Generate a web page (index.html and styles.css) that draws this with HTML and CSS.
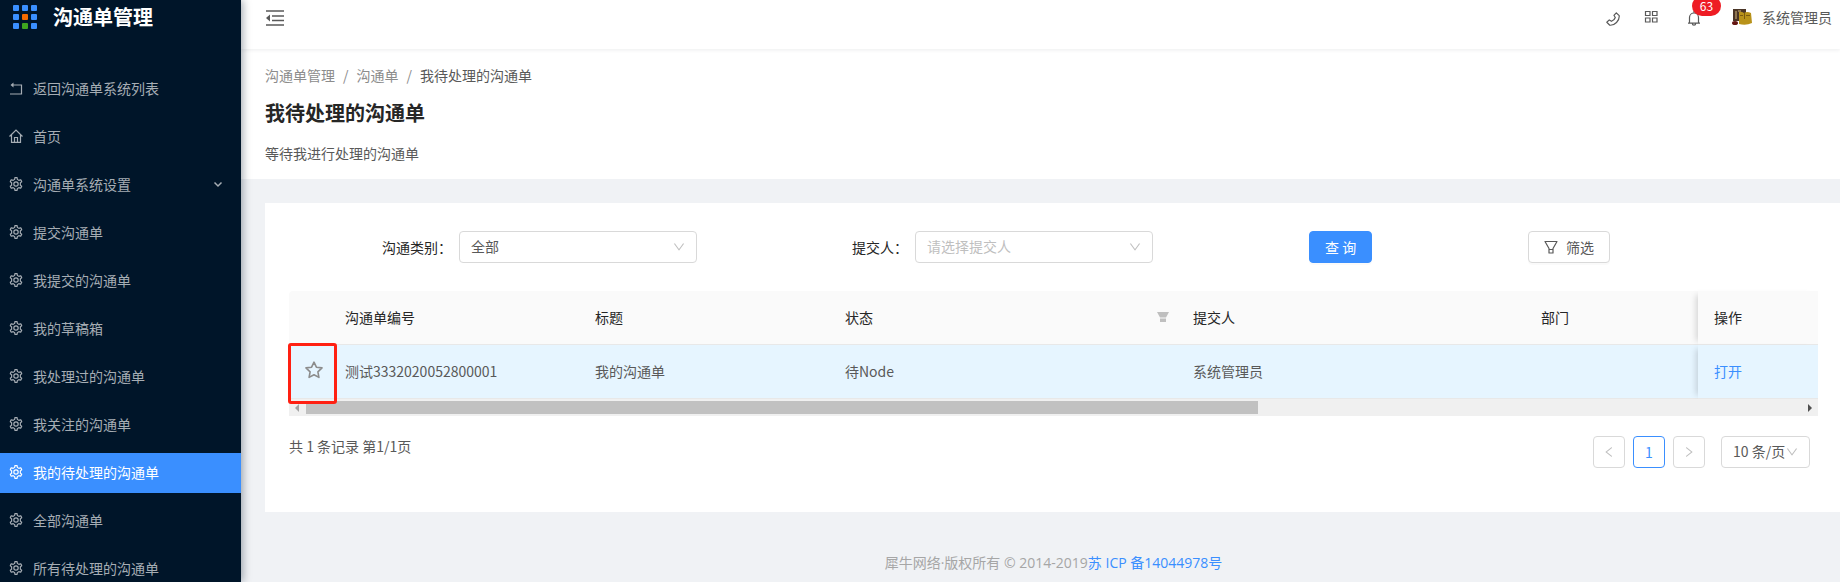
FILE: index.html
```
<!DOCTYPE html>
<html lang="zh-CN">
<head>
<meta charset="UTF-8">
<meta name="viewport" content="width=device-width, initial-scale=1.0">
<title>我待处理的沟通单</title>
<link rel="stylesheet" href="styles.css">
</head>
<body>

<!-- icons -->
<svg class="sprite" aria-hidden="true">
  <symbol id="i-setting" viewBox="64 64 896 896">
    <path fill="none" stroke="currentColor" stroke-width="76" stroke-linejoin="round" d="M443 108q69-14 138 0l19 116q52 18 94 56l112-40q48 54 70 124l-88 76q10 67 0 144l88 76q-22 66-70 124l-112-40q-42 38-94 56l-19 116q-69 14-138 0l-19-116q-52-18-94-56l-112 40q-48-54-70-124l88-76q-10-67 0-144l-88-76q22-66 70-124l112 40q42-38 94-56z"/>
    <circle cx="512" cy="512" r="140" fill="none" stroke="currentColor" stroke-width="76"/>
  </symbol>
  <symbol id="i-down" viewBox="64 64 896 896">
    <path fill="currentColor" d="M884 256h-75c-5.100 0-9.900 2.500-12.900 6.600L512 654.200 227.900 262.600c-3-4.100-7.800-6.600-12.900-6.600h-75c-6.500 0-10.300 7.400-6.500 12.700l352.600 486.100c12.800 17.600 39 17.600 51.700 0l352.600-486.100c3.900-5.300.1-12.700-6.400-12.700z"/>
  </symbol>
  <symbol id="i-left" viewBox="64 64 896 896">
    <path fill="currentColor" d="M724 218.300V141c0-6.700-7.700-10.400-12.900-6.300L260.300 486.800a31.860 31.860 0 0 0 0 50.300l450.800 352.100c5.300 4.100 12.900.4 12.900-6.300v-77.300c0-4.900-2.300-9.600-6.100-12.600l-360-281 360-281.100c3.800-3 6.100-7.700 6.100-12.600z"/>
  </symbol>
</svg>

<div class="layout">
  <aside class="sider">
    <div class="logo">
      <svg class="logo-mark" viewBox="0 0 24 24" aria-hidden="true">
        <g fill="#3a8fff">
          <rect width="6" height="6" rx="1"/><rect x="9" width="6" height="6" rx="1"/><rect x="18" width="6" height="6" rx="1"/>
          <rect y="9" width="6" height="6" rx="1"/><rect x="18" y="9" width="6" height="6" rx="1"/>
          <rect y="18" width="6" height="6" rx="1"/><rect x="18" y="18" width="6" height="6" rx="1"/>
        </g>
        <rect x="9" y="9" width="6" height="6" rx="1" fill="#f56a00"/>
        <rect x="9" y="18" width="6" height="6" rx="1" fill="#3fa41f"/>
      </svg>
      <strong>沟通单管理</strong>
    </div>
    <nav class="menu">
      <a href="#"><svg class="icon" viewBox="0 0 14 14"><path fill="none" stroke="currentColor" stroke-width="1.200" d="M1 13h11.500V4H3"/><path fill="currentColor" d="M4.500 1.500v5L1.500 4z"/></svg>返回沟通单系统列表</a>
      <a href="#"><svg class="icon" viewBox="0 0 14 14"><path fill="none" stroke="currentColor" stroke-width="1.200" d="M.5 7.500 7 1l6.500 6.500M2.500 6v7.300h9V6M5.500 13V8.500h3V13"/></svg>首页</a>
      <a href="#"><svg class="icon"><use href="#i-setting"/></svg>沟通单系统设置<svg class="arrow" viewBox="0 0 10 10"><path fill="none" stroke="currentColor" stroke-width="1.500" d="M1.500 3.500 5 7l3.500-3.500"/></svg></a>
      <a href="#"><svg class="icon"><use href="#i-setting"/></svg>提交沟通单</a>
      <a href="#"><svg class="icon"><use href="#i-setting"/></svg>我提交的沟通单</a>
      <a href="#"><svg class="icon"><use href="#i-setting"/></svg>我的草稿箱</a>
      <a href="#"><svg class="icon"><use href="#i-setting"/></svg>我处理过的沟通单</a>
      <a href="#"><svg class="icon"><use href="#i-setting"/></svg>我关注的沟通单</a>
      <a href="#" class="active"><svg class="icon"><use href="#i-setting"/></svg>我的待处理的沟通单</a>
      <a href="#"><svg class="icon"><use href="#i-setting"/></svg>全部沟通单</a>
      <a href="#"><svg class="icon"><use href="#i-setting"/></svg>所有待处理的沟通单</a>
    </nav>
  </aside>

  <div class="main">
    <header class="topbar">
      <button type="button" class="icon-btn fold" aria-label="收起菜单">
        <svg viewBox="0 0 18 16"><path fill="none" stroke="currentColor" stroke-width="1.600" d="M0 1h18M6 6h12M6 10.500h12M0 15h18"/><path fill="currentColor" d="M4 4.500v7L0 8z"/></svg>
      </button>
      <div class="tools">
        <button type="button" class="icon-btn phone" aria-label="电话">
          <svg viewBox="0 0 14 14"><path fill="none" stroke="currentColor" stroke-width="1.200" stroke-linejoin="round" d="M10.300.8 13.200 3.700Q13.500 7.500 10.500 10.500T3.800 13.200L.8 10.300 3.300 7.900 5.500 9.300Q8.500 8 9.300 5.500L7.900 3.300z"/></svg>
        </button>
        <button type="button" class="icon-btn" aria-label="应用">
          <svg viewBox="0 0 14 14"><path fill="none" stroke="currentColor" stroke-width="1.200" d="M1.500 1.500h4.500v4H1.500zM8.500 1.500h4.500v4H8.500zM1.500 8h4.500v4H1.500zM8.500 8h4.500v4H8.500z"/></svg>
        </button>
        <button type="button" class="icon-btn bell" aria-label="通知">
          <svg viewBox="0 0 14 16"><path fill="none" stroke="currentColor" stroke-width="1.200" d="M1 13.200h12M2.500 13V7.500a4.500 4.500 0 0 1 9 0V13M7 3V1M5.300 13.500a1.700 1.700 0 0 0 3.400 0"/></svg>
          <span class="badge">63</span>
        </button>
        <a href="#" class="user">
          <svg class="avatar" viewBox="0 0 20 18" aria-hidden="true">
            <path fill="#4a3527" d="M1 1h13v12H1z"/>
            <path fill="#8f7650" d="M3 3h2v8H3zM6 2h3v2H6z"/>
            <path fill="#b8921a" d="M7 4q2-1 5 1 3-2 7 0l1 10q-6 3-13 1z"/>
            <path fill="#7b5a10" d="M12 5h1v6h-1zM8 7h3v1H8zM14 7h4v1h-4z"/>
            <ellipse cx="3" cy="15" rx="3" ry="2" fill="#641512"/>
          </svg>
          系统管理员
        </a>
      </div>
    </header>

    <section class="page-header">
      <nav class="breadcrumb">
        <a href="#">沟通单管理</a><span class="sep">/</span><a href="#">沟通单</a><span class="sep">/</span><span class="current">我待处理的沟通单</span>
      </nav>
      <h1>我待处理的沟通单</h1>
      <p>等待我进行处理的沟通单</p>
    </section>

    <main class="card">
      <form class="search">
        <div class="field">
          <label for="category">沟通类别：</label>
          <div class="select">
            <select id="category"><option>全部</option></select>
            <svg class="caret"><use href="#i-down"/></svg>
          </div>
        </div>
        <div class="field">
          <label for="submitter">提交人：</label>
          <div class="select">
            <select id="submitter" class="empty"><option>请选择提交人</option></select>
            <svg class="caret"><use href="#i-down"/></svg>
          </div>
        </div>
        <div class="field"><button type="button" class="btn primary">查 询</button></div>
        <div class="field">
          <button type="button" class="btn">
            <svg class="btn-icon" viewBox="0 0 14 14"><path fill="none" stroke="currentColor" stroke-width="1.200" stroke-linejoin="round" d="M1 1.500h12L9 8.500V13H5V8.500zM5 9.500h4"/></svg>筛选
          </button>
        </div>
      </form>

      <div class="table-wrap">
        <table>
          <colgroup>
            <col class="c-star"><col class="c-text"><col class="c-text"><col class="c-wide"><col class="c-wide"><col><col class="c-action">
          </colgroup>
          <thead>
            <tr>
              <th></th>
              <th>沟通单编号</th>
              <th>标题</th>
              <th><div class="filter-head">状态<svg class="filter" viewBox="0 0 12 12"><path fill="currentColor" d="M0 1h12L9 6.500H3zM3 7.500h6V11H3z"/></svg></div></th>
              <th>提交人</th>
              <th>部门</th>
              <th class="fixed">操作</th>
            </tr>
          </thead>
          <tbody>
            <tr>
              <td class="star-cell">
                <button type="button" class="icon-btn star" aria-label="关注">
                  <svg viewBox="0 0 18 18"><path fill="none" stroke="currentColor" stroke-width="1.600" stroke-linejoin="round" d="m9 1.200 2.400 5 5.600.7-4.100 3.900 1 5.600L9 13.700l-4.900 2.700 1-5.600L1 6.900l5.600-.7z"/></svg>
                </button>
                <span class="mark"></span>
              </td>
              <td>测试3332020052800001</td>
              <td>我的沟通单</td>
              <td>待Node</td>
              <td>系统管理员</td>
              <td></td>
              <td class="fixed"><a href="#">打开</a></td>
            </tr>
          </tbody>
        </table>
        <div class="scrollbar">
          <span class="tri tri-left"></span>
          <span class="track"><span class="thumb"></span></span>
          <span class="tri tri-right"></span>
        </div>
      </div>

      <div class="table-footer">
        <span class="total">共 1 条记录 第1/1页</span>
        <div class="pagination">
          <button type="button" aria-label="上一页" disabled><svg><use href="#i-left"/></svg></button>
          <button type="button" class="on">1</button>
          <button type="button" aria-label="下一页" disabled><svg class="flip"><use href="#i-left"/></svg></button>
          <div class="select size">
            <select aria-label="每页条数"><option>10 条/页</option></select>
            <svg class="caret"><use href="#i-down"/></svg>
          </div>
        </div>
      </div>
    </main>

    <footer class="footer">犀牛网络·版权所有 © 2014-2019<a href="#">苏 ICP 备14044978号</a></footer>
  </div>
</div>

</body>
</html>
```

FILE: styles.css
```
* {
  box-sizing: border-box;
}
body {
  margin: 0;
  overflow: hidden;
  background: #f0f2f5;
  color: #595959;
  font-family: "Noto Sans CJK SC", sans-serif;
  font-size: 14px;
  line-height: 22px;
}
a {
  color: #3a8fff;
  text-decoration: none;
}
button,
select {
  font: inherit;
  color: inherit;
}
svg {
  display: block;
  flex: none;
}
.sprite {
  display: none;
}
.layout {
  display: flex;
  height: 100vh;
}

/* sidebar */
.sider {
  position: relative;
  z-index: 2;
  flex: none;
  width: 241px;
  overflow: hidden;
  background: #001529;
  box-shadow: 2px 0 8px rgba(0, 21, 41, .35);
}
.logo {
  display: flex;
  align-items: center;
  gap: 16px;
  height: 34px;
  margin-bottom: 35px;
  padding-left: 13px;
  color: #fff;
  font-size: 20px;
}
.logo-mark {
  width: 24px;
  height: 24px;
}
.menu a {
  display: flex;
  align-items: center;
  height: 40px;
  margin-bottom: 8px;
  padding: 0 18px 2px 9px;
  color: #a6adb4;
}
.menu a.active {
  background: #3a8fff;
  color: #fff;
}
.menu .icon {
  width: 14px;
  height: 14px;
  margin-right: 10px;
}
.menu .arrow {
  width: 10px;
  height: 10px;
  margin-left: auto;
}

/* top bar */
.main {
  flex: 1;
  min-width: 0;
}
.topbar {
  position: relative;
  display: flex;
  justify-content: space-between;
  height: 49px;
  padding: 0 8px 0 25px;
  background: #fff;
  box-shadow: 0 1px 4px rgba(0, 21, 41, .08);
}
.icon-btn {
  position: relative;
  padding: 0;
  border: 0;
  background: none;
  cursor: pointer;
}
.icon-btn svg {
  width: 14px;
  height: 14px;
}
.fold {
  height: 36px;
}
.fold svg {
  width: 18px;
  height: 16px;
}
.tools {
  display: flex;
  align-items: center;
  height: 34px;
}
.phone {
  margin-right: 24px;
  padding-top: 4px;
}
.bell {
  margin: 2px 31px 0 29px;
}
.bell svg {
  width: 14px;
  height: 16px;
}
.badge {
  position: absolute;
  top: -14px;
  left: 5px;
  width: 29px;
  height: 20px;
  border-radius: 10px;
  background: #ee1c24;
  color: #fff;
  font-size: 12px;
  line-height: 20px;
}
.user {
  display: flex;
  align-items: center;
  gap: 10px;
  color: #595959;
}
.avatar {
  width: 20px;
  height: 18px;
}

/* page header */
.page-header {
  height: 130px;
  padding: 15px 24px 0;
  background: #fff;
}
.breadcrumb,
.breadcrumb a {
  color: #8c8c8c;
}
.breadcrumb .sep {
  margin: 0 8px;
}
.breadcrumb .current {
  color: #595959;
}
.page-header h1 {
  margin: 11px 0 13px;
  color: #262626;
  font-size: 20px;
  line-height: 32px;
}
.page-header p {
  margin: 0;
}

/* search form */
.card {
  margin: 24px 0 0 24px;
  padding: 28px 22px 44px 24px;
  background: #fff;
}
.search {
  display: grid;
  grid-template-columns: 431fr 496fr 219fr 290fr;
  margin-bottom: 28px;
  padding-left: 93px;
}
.field {
  display: flex;
  align-items: center;
}
.field label {
  color: #262626;
}
.search .field:nth-child(2) {
  padding-left: 39px;
}
.search .select {
  width: 238px;
}
.field label + .select {
  margin-left: 7px;
}
.select {
  position: relative;
}
.select select {
  display: block;
  width: 100%;
  height: 32px;
  padding: 0 11px 2px;
  border: 1px solid #d9d9d9;
  border-radius: 4px;
  background: #fff;
  appearance: none;
}
.select select.empty {
  color: #bfbfbf;
}
.caret {
  position: absolute;
  top: 10px;
  right: 12px;
  width: 12px;
  height: 12px;
  color: #bfbfbf;
  pointer-events: none;
}
.btn {
  display: flex;
  align-items: center;
  gap: 8px;
  height: 32px;
  padding: 0 15px 1px;
  border: 1px solid #d9d9d9;
  border-radius: 4px;
  background: #fff;
  box-shadow: 0 2px 0 rgba(0, 0, 0, .02);
  cursor: pointer;
}
.btn.primary {
  border-color: #3a8fff;
  background: #3a8fff;
  color: #fff;
}
.btn-icon {
  width: 14px;
  height: 14px;
}

/* table */
table {
  width: 100%;
  table-layout: fixed;
  border-collapse: separate;
  border-spacing: 0;
}
.c-star {
  width: 48px;
}
.c-text {
  width: 250px;
}
.c-wide {
  width: 348px;
}
.c-action {
  width: 120px;
}
th,
td {
  height: 54px;
  padding: 0 8px 2px;
  border-bottom: 1px solid #e8e8e8;
  text-align: left;
}
th {
  background: #fafafa;
  color: #262626;
  font-weight: 400;
}
th:first-child {
  border-top-left-radius: 4px;
}
td {
  background: #e6f5ff;
}
.filter-head {
  display: flex;
  align-items: center;
  justify-content: space-between;
  padding-right: 8px;
}
.filter {
  width: 12px;
  height: 12px;
  color: #bfbfbf;
}
.fixed {
  padding-left: 16px;
  box-shadow: -6px 0 6px -4px rgba(0, 0, 0, .15);
}
.star-cell {
  position: relative;
  padding: 0 16px;
}
.star {
  display: block;
  margin-bottom: 4px;
  color: #8c8c8c;
}
.star svg {
  width: 18px;
  height: 18px;
}
/* red frame round the follow star */
.mark {
  position: absolute;
  z-index: 1;
  inset: -2px 0 -6px -1px;
  border: 3px solid #ff2012;
  border-radius: 3px;
  pointer-events: none;
}
.scrollbar {
  display: flex;
  align-items: center;
  justify-content: space-between;
  height: 17px;
  padding: 0 6px;
  background: #f0f0f0;
}
.track {
  flex: 1;
  margin: 0 7px;
}
.thumb {
  display: block;
  width: 63.700%;
  height: 13px;
  background: #c1c1c1;
}
.tri {
  border: 4px solid transparent;
}
.tri-left {
  border-right-color: #a3a3a3;
  border-left: 0;
}
.tri-right {
  border-left-color: #505050;
  border-right: 0;
}

/* pagination */
.table-footer {
  display: flex;
  justify-content: space-between;
  padding: 20px 8px 0 0;
}
.total {
  line-height: 20px;
}
.pagination {
  display: flex;
  gap: 8px;
}
.pagination button {
  display: flex;
  align-items: center;
  justify-content: center;
  width: 32px;
  height: 32px;
  padding: 0;
  border: 1px solid #d9d9d9;
  border-radius: 4px;
  background: #fff;
  color: #bfbfbf;
}
.pagination button svg {
  width: 12px;
  height: 12px;
}
.pagination button.on {
  border-color: #3a8fff;
  color: #3a8fff;
}
.pagination .flip {
  transform: scaleX(-1);
}
.size {
  width: 89px;
  margin-left: 8px;
}

.footer {
  padding: 40px 0 0 26px;
  color: #a6a6a6;
  font-family: "Open Sans", "Noto Sans CJK SC", sans-serif;
  text-align: center;
}
```
